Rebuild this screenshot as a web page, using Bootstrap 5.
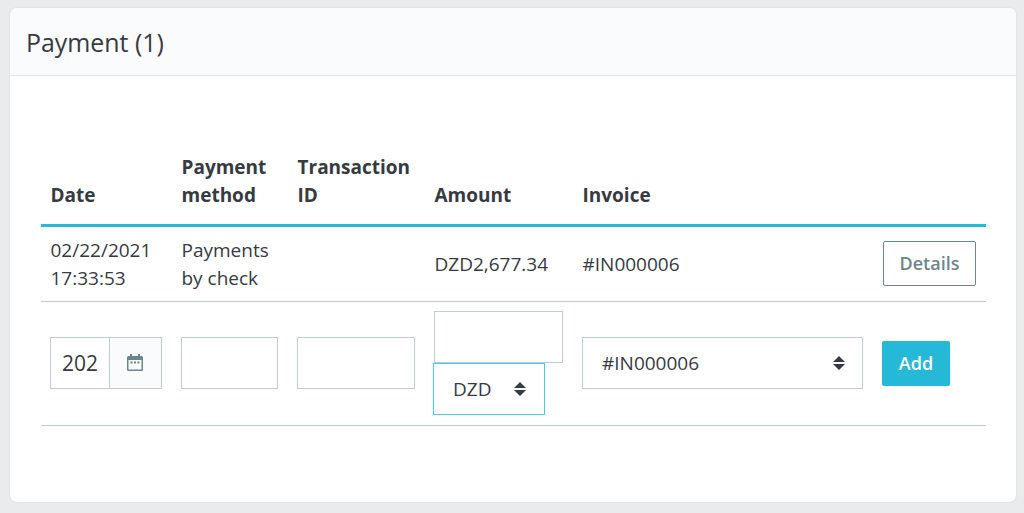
<!DOCTYPE html>
<html lang="en">
<head>
<meta charset="utf-8">
<title>Payment</title>
<link rel="stylesheet" href="https://cdn.jsdelivr.net/npm/bootstrap@5.3.0/dist/css/bootstrap.min.css">
<style>
html, body { height: 513px; overflow: hidden; }
body { background: #e9ebec; font-family: "Open Sans", sans-serif; color: #363a41; font-size: 19px; }
.pay-card { margin: 8px 8px 0 10px; height: 494px; border: 0; border-radius: 7px; box-shadow: 0 0 2px rgba(0,0,0,.1); overflow: hidden; }
.pay-head { height: 68px; background: #fafbfc; border-bottom: 1px solid #dbe6e9; padding: 2px 16px 0; display: flex; align-items: center; font-size: 24.9px; font-weight: 500; line-height: 1; }
.pay-body { padding: 77px 30px 0 31px; }
.pay-table { table-layout: fixed; width: 945px; margin: 0; color: #363a41; --bs-table-color: #363a41; border-collapse: collapse; }
.pay-table th, .pay-table td { padding: 10px 10px 10px 9.5px; vertical-align: middle; line-height: 28px; }
.pay-table thead th { vertical-align: bottom; font-weight: 700; border-bottom: 3px solid #25b9d7; padding: 0 10px 15px 9.5px; }
.pay-table tbody td { border-bottom: 1px solid #bbcdd2; }
.pay-table tbody tr.info-row td { height: 75px; padding-top: 9px; padding-bottom: 9px; }
.pay-table tbody tr.info-row td:last-child { padding-left: 10px; }
.pay-table tbody tr.form-row td { height: 124px; padding: 8px 10px 10px 9px; }
.pay-table tbody tr.form-row td:last-child { padding-top: 10px; padding-bottom: 10px; }
.pay-input { display: block; width: 100%; height: 52px; border: 1px solid #bbcdd2; background: #fff; border-radius: 0; padding: 0 11px; color: #363a41; font-size: 19px; }
.pay-input:focus { outline: none; box-shadow: none; }
.pay-date { width: 112px; display: flex; }
.pay-date .pay-input { width: 60px; padding: 0 11px 0 11px; font-size: 21px; }
.cal-box { width: 53px; height: 52px; margin-left: -1px; background: #fafbfc; border: 1px solid #bbcdd2; display: flex; align-items: center; justify-content: center; flex: none; padding: 0 1px 1px 0; }
.pay-select { appearance: none; display: flex; align-items: center; position: relative; }
.pay-select svg { position: absolute; right: 17px; top: 17px; }
.cur-select { width: 112px; margin-left: -1px; margin-top: 0; border-color: #40d0ee; padding-left: 19px; }
.cur-select svg { right: 18px; }
.inv-select { width: 281px; padding-left: 19px; }
.btn-details { width: 93px; height: 45px; padding: 0; margin-left: 0; margin-bottom: 2px; border: 1px solid #6c868e; border-radius: 2px; background: #fff; color: #6c868e; font-weight: 600; font-size: 18px; }
.btn-add { width: 68px; height: 45px; padding: 0; border: 0; border-radius: 2px; background: #25b9d7; color: #fff; font-weight: 600; font-size: 18px; }
</style>
</head>
<body>
<div class="card pay-card">
  <div class="pay-head">Payment (1)</div>
  <div class="pay-body">
    <table class="table pay-table">
      <colgroup><col style="width:131px"><col style="width:116px"><col style="width:137px"><col style="width:148px"><col style="width:300px"><col></colgroup>
      <thead>
        <tr><th>Date</th><th>Payment method</th><th>Transaction ID</th><th>Amount</th><th>Invoice</th><th></th></tr>
      </thead>
      <tbody>
        <tr class="info-row">
          <td>02/22/2021 17:33:53</td>
          <td>Payments by check</td>
          <td></td>
          <td>DZD2,677.34</td>
          <td>#IN000006</td>
          <td><button type="button" class="btn btn-details">Details</button></td>
        </tr>
        <tr class="form-row">
          <td>
            <div class="pay-date">
              <input class="pay-input" type="text" value="2021-02-22" aria-label="Date">
              <div class="cal-box">
                <svg width="16" height="17" viewBox="0 0 16 17" aria-hidden="true"><path fill="#6c868e" d="M3 0h2v2h6V0h2v2h1.5A1.5 1.5 0 0 1 16 3.500v12a1.500 1.500 0 0 1-1.500 1.500h-13A1.500 1.500 0 0 1 0 15.500v-12A1.500 1.500 0 0 1 1.500 2H3z"/><rect x="1.500" y="6" width="13" height="9.500" fill="#fafbfc"/><rect x="3.500" y="7.500" width="2" height="2" fill="#6c868e"/><rect x="7" y="7.500" width="2" height="2" fill="#6c868e"/><rect x="10.500" y="7.500" width="2" height="2" fill="#6c868e"/></svg>
              </div>
            </div>
          </td>
          <td><input class="pay-input" type="text" aria-label="Payment method"></td>
          <td><input class="pay-input" type="text" aria-label="Transaction ID"></td>
          <td>
            <input class="pay-input" type="text" aria-label="Amount">
            <div class="pay-input pay-select cur-select">DZD<svg width="12" height="16" viewBox="0 0 12 16" aria-hidden="true"><path fill="#363a41" d="M6 1l6 6H0zM0 9h12l-6 6z"/></svg></div>
          </td>
          <td>
            <div class="pay-input pay-select inv-select">#IN000006<svg width="12" height="16" viewBox="0 0 12 16" aria-hidden="true"><path fill="#363a41" d="M6 1l6 6H0zM0 9h12l-6 6z"/></svg></div>
          </td>
          <td><button type="button" class="btn btn-add">Add</button></td>
        </tr>
      </tbody>
    </table>
  </div>
</div>
</body>
</html>
